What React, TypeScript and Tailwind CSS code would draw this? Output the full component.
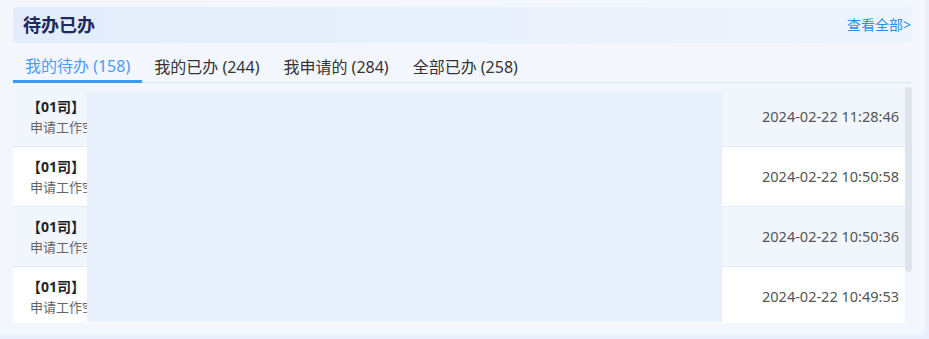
import React from "react";

const rows = [
  { time: "2024-02-22 11:28:46", white: false },
  { time: "2024-02-22 10:50:58", white: true },
  { time: "2024-02-22 10:50:36", white: false },
  { time: "2024-02-22 10:49:53", white: true },
];

const tabs = ["我的待办 (158)", "我的已办 (244)", "我申请的 (284)", "全部已办 (258)"];

export default function App() {
  return (
    <div
      className="w-[929px] h-[339px] bg-[#e9f0fb] overflow-hidden"
      style={{ fontFamily: '"Noto Sans", "Noto Sans CJK SC", sans-serif' }}
    >
      <div className="w-[925px] h-[335px] bg-[#f3f7fd] rounded-br-[6px] pl-[13px] pr-[13px] pt-[7px] flex flex-col">
        <div className="h-[36px] rounded-[4px] bg-gradient-to-r from-[#e2ecfa] to-[#eef4fc] flex items-center justify-between pl-[10px] pr-[1px] shrink-0">
          <span className="text-[18px] font-bold text-[#1d2a5e] leading-none">待办已办</span>
          <span className="text-[14px] text-[#2d8cf0] leading-none">查看全部&gt;</span>
        </div>
        <div className="mt-[6px] h-[34px] flex items-stretch border-b border-[#dde3ea] shrink-0 mr-[1px]">
          {tabs.map((t, i) => (
            <div
              key={t}
              className={
                i === 0
                  ? "px-[12px] flex items-center text-[16px] text-[#4a9cf7] border-b-[3px] border-[#3a9bf6] pt-[3px] -mb-[1px]"
                  : "px-[12px] flex items-center text-[16px] text-[#333333] pt-[3px]"
              }
            >
              {t}
            </div>
          ))}
        </div>
        <div className="relative mt-[4px] h-[236px] overflow-hidden">
          <div className="w-[892px] flex flex-col">
            {rows.map((r, i) => (
              <div
                key={i}
                className={
                  (r.white ? "bg-white" : "bg-[#f1f5fc]") +
                  " h-[60px] shrink-0 border-b border-[#e4eaf3] flex items-center justify-between pl-[14px] pr-[6px]"
                }
              >
                <div className="flex flex-col gap-[3px]">
                  <span className="text-[14px] font-bold text-[#222222] leading-[19px]">【01司】</span>
                  <span className="text-[13px] text-[#666666] leading-[17px] pl-[3px]">申请工作空间审批</span>
                </div>
                <span className="text-[14.5px] text-[#555555]">{r.time}</span>
              </div>
            ))}
          </div>
          <div className="absolute left-[892px] top-0 w-[7px] h-[185px] rounded-[4px] bg-[#dfe4ec]" />
          <div className="absolute left-[74px] top-[6px] w-[635px] h-[229px] bg-[#e8f0fb]" />
        </div>
      </div>
    </div>
  );
}
